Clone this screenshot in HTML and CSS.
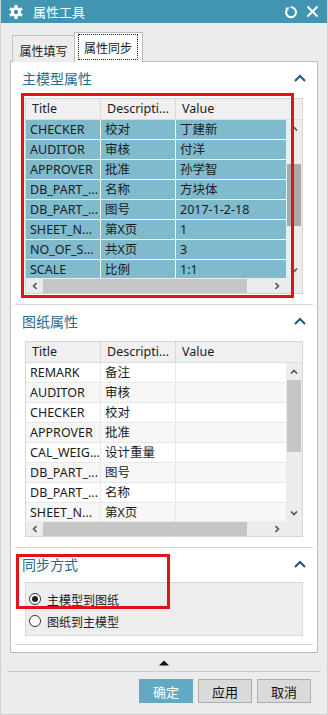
FILE: index.html
```html
<!DOCTYPE html>
<html lang="zh-CN">
<head>
    <meta charset="UTF-8">
    <meta name="viewport" content="width=device-width, initial-scale=1.0">
    <title>属性工具</title>
    <link rel="stylesheet" href="styles.css">
</head>
<body>
<div class="window">
    <div class="titlebar">
        <svg class="gear" width="16" height="16" viewBox="0 0 16 16">
            <g fill="#fff">
                <circle cx="8" cy="8" r="5"/>
                <rect x="6.5" y="1" width="3" height="14"/>
                <rect x="6.5" y="1" width="3" height="14" transform="rotate(60 8 8)"/>
                <rect x="6.5" y="1" width="3" height="14" transform="rotate(120 8 8)"/>
            </g>
            <circle cx="8" cy="8" r="2.2" fill="#4195b2"/>
        </svg>
        <span class="title">属性工具</span>
        <div class="title-icons">
            <svg width="14" height="14" viewBox="0 0 14 14">
                <path d="M6.5 2.3 A5 5 0 1 1 2.6 5" fill="none" stroke="#fff" stroke-width="2"/>
                <path d="M1 3 L5 2 L4 6 Z" fill="#fff"/>
            </svg>
            <svg width="13" height="13" viewBox="0 0 13 13">
                <path d="M1.5 1.5 L11.5 11.5 M11.5 1.5 L1.5 11.5" stroke="#fff" stroke-width="2"/>
            </svg>
        </div>
    </div>

    <div class="content">
        <div class="tabs">
            <div class="tab">属性填写</div>
            <div class="tab active"><span class="focus">属性同步</span></div>
        </div>

        <div class="panel">
            <div class="section">
                <div class="section-head">
                    <span>主模型属性</span>
                    <svg width="12" height="8" viewBox="0 0 12 8"><polyline points="1,7 6,2 11,7" fill="none" stroke="#1e5a78" stroke-width="2"/></svg>
                </div>
                <div class="grid">
                    <div class="grid-head">
                        <div>Title</div><div>Descripti...</div><div>Value</div>
                    </div>
                    <div class="grid-body">
                        <div class="rows selected">
                            <div class="row"><span>CHECKER</span><span>校对</span><span>丁建新</span></div>
                            <div class="row"><span>AUDITOR</span><span>审核</span><span>付洋</span></div>
                            <div class="row"><span>APPROVER</span><span>批准</span><span>孙学智</span></div>
                            <div class="row"><span>DB_PART_...</span><span>名称</span><span>方块体</span></div>
                            <div class="row"><span>DB_PART_...</span><span>图号</span><span>2017-1-2-18</span></div>
                            <div class="row"><span>SHEET_N...</span><span>第X页</span><span>1</span></div>
                            <div class="row"><span>NO_OF_S...</span><span>共X页</span><span>3</span></div>
                            <div class="row"><span>SCALE</span><span>比例</span><span>1:1</span></div>
                        </div>
                        <div class="vscroll">
                            <span class="arrow"><svg width="8" height="5" viewBox="0 0 8 5"><polyline points="1,4.5 4,1.5 7,4.5" fill="none" stroke="#555" stroke-width="1.6"/></svg></span>
                            <span class="thumb thumb-main"></span>
                            <span class="arrow"><svg width="8" height="5" viewBox="0 0 8 5"><polyline points="1,0.5 4,3.5 7,0.5" fill="none" stroke="#555" stroke-width="1.6"/></svg></span>
                        </div>
                    </div>
                    <div class="grid-foot">
                        <div class="hscroll">
                            <span class="arrow"><svg width="5" height="8" viewBox="0 0 5 8"><polyline points="4.5,1 1.5,4 4.5,7" fill="none" stroke="#555" stroke-width="1.6"/></svg></span>
                            <span class="hthumb"></span>
                            <span class="arrow"><svg width="5" height="8" viewBox="0 0 5 8"><polyline points="0.5,1 3.5,4 0.5,7" fill="none" stroke="#555" stroke-width="1.6"/></svg></span>
                        </div>
                        <div class="corner"></div>
                    </div>
                </div>
                <div class="mark mark-main"></div>
            </div>

            <div class="section">
                <div class="section-head">
                    <span>图纸属性</span>
                    <svg width="12" height="8" viewBox="0 0 12 8"><polyline points="1,7 6,2 11,7" fill="none" stroke="#1e5a78" stroke-width="2"/></svg>
                </div>
                <div class="grid">
                    <div class="grid-head">
                        <div>Title</div><div>Descripti...</div><div>Value</div>
                    </div>
                    <div class="grid-body">
                        <div class="rows">
                            <div class="row"><span>REMARK</span><span>备注</span><span></span></div>
                            <div class="row"><span>AUDITOR</span><span>审核</span><span></span></div>
                            <div class="row"><span>CHECKER</span><span>校对</span><span></span></div>
                            <div class="row"><span>APPROVER</span><span>批准</span><span></span></div>
                            <div class="row"><span>CAL_WEIG...</span><span>设计重量</span><span></span></div>
                            <div class="row"><span>DB_PART_...</span><span>图号</span><span></span></div>
                            <div class="row"><span>DB_PART_...</span><span>名称</span><span></span></div>
                            <div class="row"><span>SHEET_N...</span><span>第X页</span><span></span></div>
                        </div>
                        <div class="vscroll">
                            <span class="arrow"><svg width="8" height="5" viewBox="0 0 8 5"><polyline points="1,4.5 4,1.5 7,4.5" fill="none" stroke="#555" stroke-width="1.6"/></svg></span>
                            <span class="thumb thumb-sheet"></span>
                            <span class="arrow"><svg width="8" height="5" viewBox="0 0 8 5"><polyline points="1,0.5 4,3.5 7,0.5" fill="none" stroke="#555" stroke-width="1.6"/></svg></span>
                        </div>
                    </div>
                    <div class="grid-foot">
                        <div class="hscroll">
                            <span class="arrow"><svg width="5" height="8" viewBox="0 0 5 8"><polyline points="4.5,1 1.5,4 4.5,7" fill="none" stroke="#555" stroke-width="1.6"/></svg></span>
                            <span class="hthumb"></span>
                            <span class="arrow"><svg width="5" height="8" viewBox="0 0 5 8"><polyline points="0.5,1 3.5,4 0.5,7" fill="none" stroke="#555" stroke-width="1.6"/></svg></span>
                        </div>
                        <div class="corner"></div>
                    </div>
                </div>
            </div>

            <div class="section section-sync">
                <div class="section-head">
                    <span>同步方式</span>
                    <svg width="12" height="8" viewBox="0 0 12 8"><polyline points="1,7 6,2 11,7" fill="none" stroke="#1e5a78" stroke-width="2"/></svg>
                </div>
                <div class="radio-group">
                    <label class="radio-row"><span class="radio checked"></span>主模型到图纸</label>
                    <label class="radio-row"><span class="radio"></span>图纸到主模型</label>
                </div>
                <div class="mark mark-sync"></div>
            </div>

            <div class="section section-end"></div>
        </div>

        <div class="collapse">
            <svg width="10" height="6" viewBox="0 0 10 6"><path d="M0 5.5 L5 0.5 L10 5.5 Z" fill="#111"/></svg>
        </div>

        <div class="footer">
            <button class="btn primary">确定</button>
            <button class="btn">应用</button>
            <button class="btn">取消</button>
        </div>
    </div>
</div>
</body>
</html>
```

FILE: styles.css
```css
body {
    margin: 0;
    padding: 0;
    background: #ececec;
    font-family: "Noto Sans", "Noto Sans CJK SC", sans-serif;
    color: #1b1b1b;
    overflow: hidden;
}
.window {
    width: 328px;
    height: 715px;
    box-sizing: border-box;
    border-left: 1px solid #d2d2d2;
    border-right: 1px solid #d2d2d2;
    border-bottom: 1px solid #cfcfcf;
    overflow: hidden;
}
.titlebar {
    height: 23px;
    margin: 0 -1px;
    background: #4195b2;
    display: flex;
    align-items: center;
    padding: 0 9px 0 8px;
    color: #fff;
}
.titlebar .gear {
    display: block;
}
.titlebar .title {
    margin-left: 9px;
    font-size: 13px;
    font-family: "Noto Sans CJK SC", sans-serif;
    line-height: 23px;
}
.title-icons {
    margin-left: auto;
    display: flex;
    align-items: center;
    gap: 8px;
}
.title-icons svg {
    display: block;
}
.content {
    padding: 9px 9px 0 9px;
}
.tabs {
    display: flex;
    align-items: flex-end;
    height: 30px;
    margin: 0 0 -1px 2px;
    position: relative;
    z-index: 1;
    font-size: 12px;
    font-family: "Noto Sans CJK SC", sans-serif;
}
.tab {
    height: 27px;
    box-sizing: border-box;
    width: 62px;
    border: 1px solid #c3c3c3;
    border-bottom: none;
    border-right: none;
    display: flex;
    align-items: center;
    justify-content: center;
    padding-top: 2px;
    background: #ececec;
}
.tab.active {
    height: 30px;
    width: 69px;
    background: #fff;
    border: 1px solid #bcbcbc;
    border-bottom: none;
    padding: 1px 4px 2px 3px;
    align-items: stretch;
}
.tab .focus {
    flex: 1;
    border: 1px dotted #222;
    display: flex;
    align-items: center;
    justify-content: center;
}
.panel {
    background: #fff;
    border: 1px solid #bcbcbc;
    height: 592px;
    box-sizing: border-box;
}
.section {
    position: relative;
    margin: 0 4px;
    padding-bottom: 10px;
    border-top: 1px solid #d3d3d3;
}
.section:first-child {
    border-top: none;
}
.section-head {
    height: 32px;
    display: flex;
    align-items: center;
    justify-content: space-between;
    padding: 0 7px 0 7px;
    font-size: 14px;
    font-family: "Noto Sans CJK SC", sans-serif;
    color: #2a6a8a;
}
.section-head svg {
    display: block;
}
.grid {
    margin: 4px 10px 0 10px;
    border: 1px solid #d6d6d6;
    font-size: 12.5px;
}
.grid-head {
    display: grid;
    grid-template-columns: 75px 75px 1fr;
    height: 21px;
    background: #f0f0f0;
    border-bottom: 1px solid #dcdcdc;
    box-sizing: border-box;
    line-height: 20px;
}
.grid-head div {
    padding-left: 6px;
    border-right: 1px solid #d9d9d9;
    white-space: nowrap;
    overflow: hidden;
}
.grid-head div:last-child {
    border-right: none;
}
.grid-body {
    display: flex;
    height: 158px;
}
.rows {
    flex: 1;
    overflow: hidden;
}
.row {
    display: grid;
    grid-template-columns: 75px 75px 1fr;
    height: 20px;
    line-height: 19px;
}
.row span {
    padding-left: 4px;
    border-right: 1px solid #e8e8e8;
    border-bottom: 1px solid #e8e8e8;
    white-space: nowrap;
    overflow: hidden;
}
.row span:last-child {
    border-right: none;
}
.rows .row:nth-child(even) {
    background: #f7f7f7;
}
.rows.selected .row {
    background: #7fbbcd;
}
.rows.selected .row span {
    border-color: #fff;
}
.vscroll {
    width: 16px;
    background: #ececec;
    display: flex;
    flex-direction: column;
    align-items: center;
}
.vscroll .arrow {
    height: 16px;
    width: 16px;
    display: flex;
    align-items: center;
    justify-content: center;
}
.vscroll .arrow:last-child {
    margin-top: auto;
}
.thumb {
    width: 14px;
    background: #c6c6c6;
}
.thumb-main {
    margin-top: 28px;
    height: 62px;
    background: #a9a9a9;
}
.thumb-sheet {
    margin-top: 1px;
    height: 72px;
}
.grid-foot {
    display: flex;
    height: 15px;
    background: #ececec;
}
.hscroll {
    flex: 1;
    display: flex;
    align-items: center;
}
.hscroll .arrow {
    width: 17px;
    height: 15px;
    display: flex;
    align-items: center;
    justify-content: center;
}
.hscroll .arrow:last-child {
    margin-left: auto;
}
.hthumb {
    width: 204px;
    height: 14px;
    background: #c6c6c6;
}
.corner {
    width: 16px;
}
.mark {
    position: absolute;
    border: 3px solid #e3121a;
    box-sizing: border-box;
    pointer-events: none;
}
.mark-main {
    top: 31px;
    left: 6px;
    width: 273px;
    height: 205px;
}
.section-sync {
    padding-bottom: 8px;
}
.mark-sync {
    top: 6px;
    left: 1px;
    width: 154px;
    height: 55px;
}
.radio-group {
    margin: 2px 10px 0 10px;
    background: #ededed;
    border: 1px solid #d9d9d9;
    padding: 5px 0 3px 3px;
    font-size: 12px;
    font-family: "Noto Sans CJK SC", sans-serif;
}
.radio-row {
    display: flex;
    align-items: center;
    height: 22px;
    gap: 6px;
}
.radio {
    width: 12px;
    height: 12px;
    box-sizing: border-box;
    border: 1px solid #333;
    border-radius: 50%;
    background: #fff;
    display: flex;
    align-items: center;
    justify-content: center;
}
.radio.checked::before {
    content: '';
    width: 6px;
    height: 6px;
    border-radius: 50%;
    background: #222;
}
.section-end {
    height: 7px;
    padding: 0;
}
.collapse {
    height: 18px;
    display: flex;
    align-items: center;
    justify-content: center;
    padding-top: 1px;
    box-sizing: border-box;
}
.collapse svg {
    display: block;
}
.footer {
    margin: 0 -3px;
    border-top: 1px solid #cbcbcb;
    padding: 7px 10px 0 0;
    display: flex;
    justify-content: flex-end;
    gap: 5px;
}
.btn {
    width: 54px;
    height: 24px;
    border: 1px solid #acacac;
    background: #dadada;
    font-family: "Noto Sans CJK SC", sans-serif;
    font-size: 13px;
    color: #111;
    padding: 0;
}
.btn.primary {
    background: #63a9c3;
    border-color: #63a9c3;
    color: #fff;
}
```
